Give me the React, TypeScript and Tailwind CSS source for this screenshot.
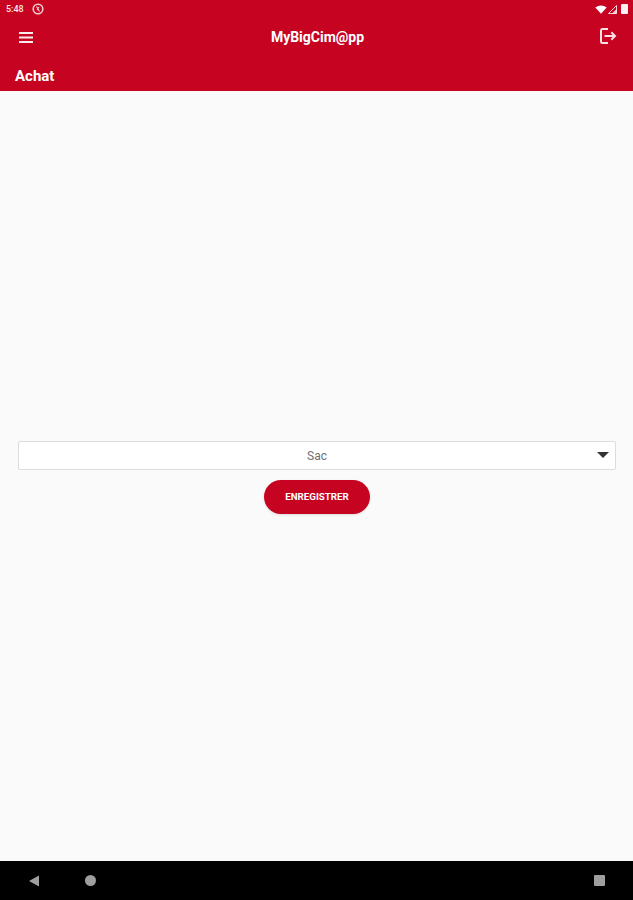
const App = () => {
  return (
    <div className="w-[633px] h-[900px] flex flex-col bg-[#fafafa] font-['Roboto',sans-serif] overflow-hidden">
      {/* Status bar + toolbar */}
      <header className="h-[91px] shrink-0 bg-[#c60321] flex flex-col text-white">
        <div className="h-[18px] flex items-center justify-between pl-[6px] pr-[5px]">
          <div className="flex items-center gap-[8px]">
            <span className="text-[9px] font-medium leading-none opacity-90">5:48</span>
            <svg width="12" height="12" viewBox="0 0 12 12">
              <circle cx="6" cy="6" r="4.8" fill="none" stroke="#fff" strokeWidth="1.6" opacity="0.8" />
              <path d="M4.5 3.5 L7.5 8.5 M7 4 L5 7" stroke="#fff" strokeWidth="1.1" opacity="0.8" />
            </svg>
          </div>
          <div className="flex items-center gap-[1px]">
            <svg width="12" height="9" viewBox="0 0 12 9">
              <path d="M0.3 2.5 Q6 -1.5 11.7 2.5 L6 8.8 Z" fill="#fff" />
            </svg>
            <svg width="9" height="9" viewBox="0 0 9 9">
              <path d="M8.5 0.5 V8.5 H0.5 Z" fill="none" stroke="#fff" strokeWidth="1" opacity="0.8" />
              <path d="M8.5 4 V8.5 H4 Z" fill="#fff" opacity="0.8" />
            </svg>
            <div className="ml-[3px] w-[7px] h-[10px] rounded-[1px] bg-white/95" />
          </div>
        </div>

        <div className="h-[38px] flex items-center justify-between pl-[19px] pr-[16px]">
          <svg width="14" height="11" viewBox="0 0 14 11" fill="#fff" opacity="0.92">
            <rect x="0" y="0" width="14" height="2" />
            <rect x="0" y="4.5" width="14" height="2" />
            <rect x="0" y="9" width="14" height="2" />
          </svg>
          <span className="ml-[3px] text-[14px] font-bold leading-none">MyBigCim@pp</span>
          <svg width="18" height="18" viewBox="0 0 18 18" fill="none" stroke="#fff" strokeWidth="2" opacity="0.88" className="-mt-[2px]">
            <path d="M9 2 H3.4 Q2 2 2 3.5 V14.5 Q2 16 3.4 16 H9" />
            <path d="M5.5 9 H16 M12.3 5.2 L16 9 L12.3 12.8" />
          </svg>
        </div>

        <div className="flex-1 flex items-center pl-[15px] pt-[5px]">
          <span className="text-[15px] font-bold leading-none">Achat</span>
        </div>
      </header>

      {/* Form */}
      <main className="flex-1 flex flex-col items-center justify-center pl-[18px] pr-[17px] pt-[3px]">
        <div className="relative w-full h-[29px] bg-white border border-[#dcdcdc] rounded-[2px] flex items-center justify-center">
          <span className="text-[12px] text-[#6f6f6f] leading-none">Sac</span>
          <div className="absolute right-[6px] top-[10px] w-0 h-0 border-x-[6px] border-x-transparent border-t-[6px] border-t-[#333]" />
        </div>
        <button className="mt-[10px] w-[106px] h-[34px] rounded-full bg-[#c60321] text-white text-[9.75px] font-bold flex items-center justify-center shadow-sm">
          ENREGISTRER
        </button>
      </main>

      {/* Navigation bar */}
      <footer className="h-[39px] shrink-0 bg-black flex items-center pl-[28px] pr-[28px]">
        <svg width="12" height="12" viewBox="0 0 12 12" className="mr-[45px]">
          <path d="M1 6 L11 0.5 V11.5 Z" fill="#9e9e9e" />
        </svg>
        <div className="w-[11px] h-[11px] rounded-full bg-[#9e9e9e]" />
        <div className="ml-auto w-[11px] h-[11px] rounded-[1px] bg-[#9e9e9e]" />
      </footer>
    </div>
  )
}

export default App
